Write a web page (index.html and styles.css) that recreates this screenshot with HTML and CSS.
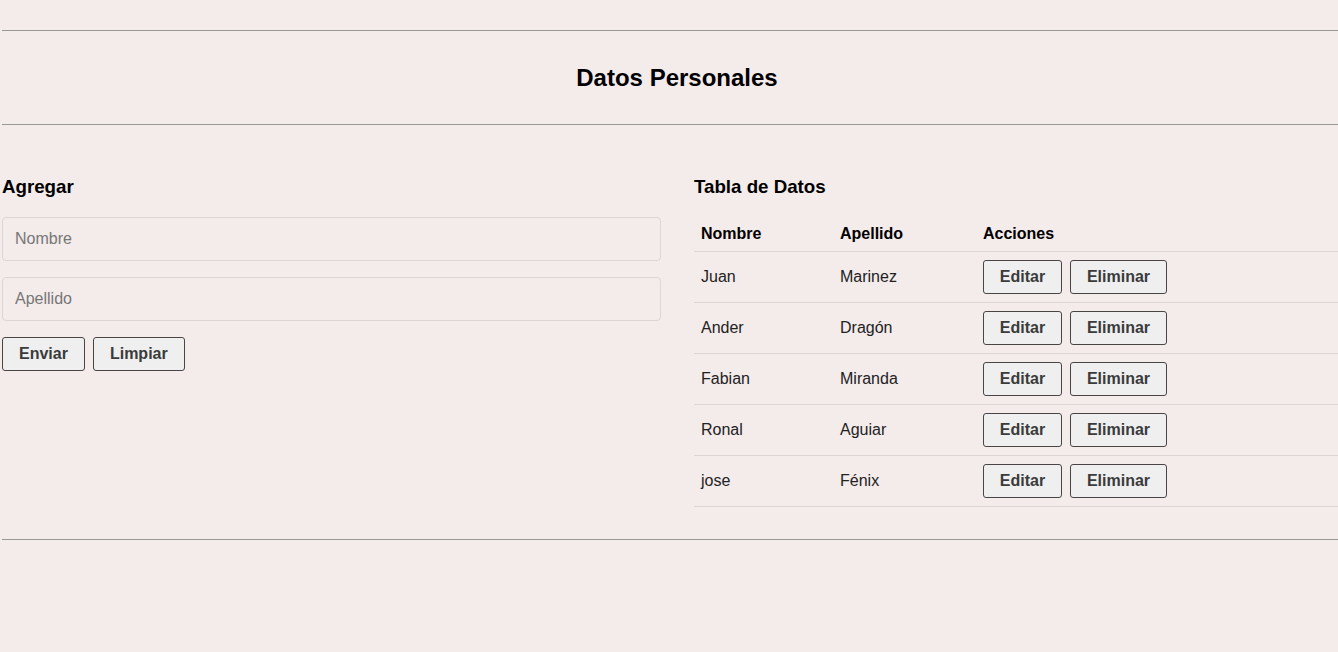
FILE: index.html
```html
<!DOCTYPE html>
<html lang="es">
<head>
<meta charset="utf-8">
<title>Datos Personales</title>
<link rel="stylesheet" href="styles.css">
</head>
<body>
<hr class="rule rule-top">
<header class="page-header">
  <h1 class="page-title">Datos Personales</h1>
</header>
<hr class="rule">
<main class="layout">
  <section class="form-col">
    <h3 class="section-title">Agregar</h3>
    <form class="form">
      <input class="field" type="text" placeholder="Nombre">
      <input class="field" type="text" placeholder="Apellido">
      <div class="actions">
        <button type="button" class="btn">Enviar</button>
        <button type="button" class="btn">Limpiar</button>
      </div>
    </form>
  </section>
  <section class="table-col">
    <h3 class="section-title">Tabla de Datos</h3>
    <table class="data-table">
      <thead>
        <tr><th class="c-name">Nombre</th><th class="c-last">Apellido</th><th>Acciones</th></tr>
      </thead>
      <tbody>
        <tr><td>Juan</td><td>Marinez</td><td><div class="row-actions"><button class="btn btn-edit">Editar</button><button class="btn btn-del">Eliminar</button></div></td></tr>
        <tr><td>Ander</td><td>Dragón</td><td><div class="row-actions"><button class="btn btn-edit">Editar</button><button class="btn btn-del">Eliminar</button></div></td></tr>
        <tr><td>Fabian</td><td>Miranda</td><td><div class="row-actions"><button class="btn btn-edit">Editar</button><button class="btn btn-del">Eliminar</button></div></td></tr>
        <tr><td>Ronal</td><td>Aguiar</td><td><div class="row-actions"><button class="btn btn-edit">Editar</button><button class="btn btn-del">Eliminar</button></div></td></tr>
        <tr><td>jose</td><td>Fénix</td><td><div class="row-actions"><button class="btn btn-edit">Editar</button><button class="btn btn-del">Eliminar</button></div></td></tr>
      </tbody>
    </table>
  </section>
</main>
<hr class="rule rule-bottom">
</body>
</html>
```

FILE: styles.css
```css
html, body {
  margin: 0;
  padding: 0;
  background: #f4ebeb;
}
body {
  padding-left: 2px;
  font-family: "Liberation Sans", Arial, sans-serif;
  color: #222;
}
.rule {
  margin: 0;
  border: 0;
  border-top: 1px solid #9a9797;
  height: 0;
}
.rule-top { margin-top: 30px; }
.rule-bottom { margin-top: 32px; }
.page-header {
  padding: 33px 0 32px 14px;
  text-align: center;
}
.page-title {
  margin: 0;
  font-size: 24px;
  line-height: 28px;
  font-weight: bold;
  color: #000;
}
.layout {
  display: grid;
  grid-template-columns: 659px 1fr;
  column-gap: 33px;
  padding-top: 51px;
}
.section-title {
  margin: 0;
  font-size: 18.72px;
  line-height: 22px;
  font-weight: bold;
  color: #000;
}
.form {
  display: flex;
  flex-direction: column;
  gap: 16px;
  margin-top: 19px;
}
.field {
  box-sizing: border-box;
  width: 100%;
  height: 44px;
  margin: 0;
  padding: 0 12px;
  border: 1px solid #dcd6d6;
  border-radius: 4px;
  background: #f4ebeb;
  font-family: "Liberation Sans", Arial, sans-serif;
  font-size: 16px;
  color: #222;
}
.field::placeholder { color: #777; }
.actions {
  display: flex;
  gap: 8px;
}
.btn {
  box-sizing: border-box;
  height: 34px;
  padding: 0 16px;
  margin: 0;
  border: 1px solid #4a4545;
  border-radius: 3px;
  background: #efefef;
  font-family: "Liberation Sans", Arial, sans-serif;
  font-size: 16px;
  font-weight: bold;
  color: #3b3b3b;
}
.data-table {
  width: 100%;
  margin-top: 18px;
  border-collapse: collapse;
  font-size: 16px;
}
.data-table th {
  text-align: left;
  font-weight: bold;
  color: #000;
  padding: 0 7px;
  height: 35px;
  line-height: 18px;
  border-bottom: 1px solid #ddd6d6;
}
.c-name { width: 125px; }
.c-last { width: 129px; }
.data-table td {
  padding: 8px 7px;
  height: 34px;
  line-height: 18px;
  border-bottom: 1px solid #ddd6d6;
  color: #222;
  vertical-align: middle;
}
.row-actions {
  display: flex;
  gap: 8px;
}
.btn-edit { width: 79px; padding: 0; }
.btn-del { width: 97px; padding: 0; }
```
